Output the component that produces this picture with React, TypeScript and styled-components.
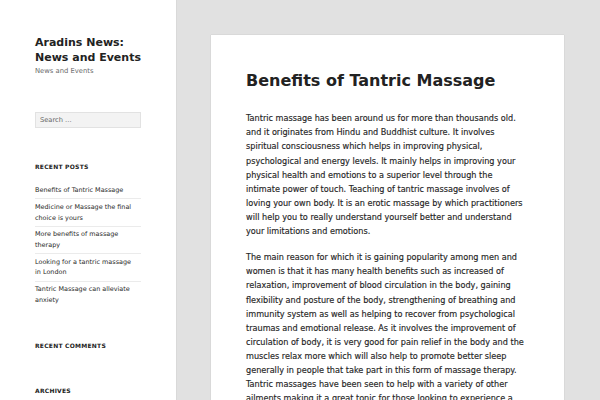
import React from "react";
import styled, { createGlobalStyle } from "styled-components";

const GlobalStyle = createGlobalStyle`
  html, body {
    margin: 0;
    padding: 0;
    height: 100%;
    overflow: hidden;
  }
  body {
    background: #e1e1e1;
    font-family: "DejaVu Sans", Verdana, sans-serif;
    color: #333;
  }
  * { box-sizing: border-box; }
`;

const Page = styled.div`
  display: flex;
  align-items: flex-start;
  min-height: 100vh;
`;

const Sidebar = styled.aside`
  flex: 0 0 176px;
  align-self: stretch;
  min-height: 100vh;
  background: #fff;
  box-shadow: 0 0 1px rgba(0, 0, 0, 0.2);
  padding: 35px 35px 0;
`;

const SiteTitle = styled.h1`
  margin: 0;
  font-size: 11px;
  line-height: 15px;
  font-weight: 700;
  color: #222;
`;

const Tagline = styled.p`
  margin: 2px 0 0;
  font-size: 6.8px;
  line-height: 9px;
  color: #6a6a6a;
`;

const Widget = styled.section<{ $gap: number }>`
  margin-top: ${(p) => p.$gap}px;
`;

const SearchInput = styled.input`
  display: block;
  width: 100%;
  height: 15.5px;
  margin: 0;
  padding: 0 4px;
  background: #f3f3f3;
  border: 1px solid #e2e2e2;
  border-radius: 0;
  font-family: "DejaVu Sans", Verdana, sans-serif;
  font-size: 6.7px;
  color: #666;
  outline: none;
  &::placeholder {
    color: #666;
    opacity: 1;
  }
`;

const WidgetTitle = styled.h2`
  margin: 0 0 11.8px;
  font-size: 6px;
  line-height: 9px;
  font-weight: 700;
  letter-spacing: 0.04em;
  text-transform: uppercase;
  color: #222;
`;

const PostList = styled.ul`
  list-style: none;
  margin: 0;
  padding: 0;
`;

const PostItem = styled.li`
  padding: 2.6px 7px 2.6px 0;
  font-size: 6.45px;
  line-height: 10.6px;
  color: #2b2b2b;
  border-top: 1px solid #ebebeb;
  &:first-child {
    border-top: 0;
  }
`;

const Main = styled.main`
  flex: 1;
  padding: 35px 36px 0 35px;
`;

const Article = styled.article`
  background: #fff;
  box-shadow: 0 0 1px rgba(0, 0, 0, 0.2);
  padding: 36px 37px 40px 35px;
`;

const EntryTitle = styled.h1`
  margin: 0 0 20.25px;
  font-size: 16px;
  line-height: 20px;
  font-weight: 700;
  color: #222;
`;

const Paragraph = styled.p`
  margin: 0 0 12.2px;
  font-size: 8.13px;
  line-height: 14.1px;
  color: #262626;
  -webkit-text-stroke: 0.15px #262626;
`;

const recentPosts = [
  "Benefits of Tantric Massage",
  "Medicine or Massage the final choice is yours",
  "More benefits of massage therapy",
  "Looking for a tantric massage in London",
  "Tantric Massage can alleviate anxiety",
];

const paragraphs = [
  "Tantric massage has been around us for more than thousands old. and it originates from Hindu and Buddhist culture. It involves spiritual consciousness which helps in improving physical, psychological and energy levels. It mainly helps in improving your physical health and emotions to a superior level through the intimate power of touch. Teaching of tantric massage involves of loving your own body. It is an erotic massage by which practitioners will help you to really understand yourself better and understand your limitations and emotions.",
  "The main reason for which it is gaining popularity among men and women is that it has many health benefits such as increased of relaxation, improvement of blood circulation in the body, gaining flexibility and posture of the body, strengthening of breathing and immunity system as well as helping to recover from psychological traumas and emotional release. As it involves the improvement of circulation of body, it is very good for pain relief in the body and the muscles relax more which will also help to promote better sleep generally in people that take part in this form of massage therapy. Tantric massages have been seen to help with a variety of other ailments making it a great tonic for those looking to experience a new level of relaxation.",
];

export default function App() {
  return (
    <>
      <GlobalStyle />
      <Page>
        <Sidebar>
          <header>
            <SiteTitle>Aradins News: News and Events</SiteTitle>
            <Tagline>News and Events</Tagline>
          </header>
          <Widget $gap={36}>
            <SearchInput type="search" placeholder="Search …" />
          </Widget>
          <Widget $gap={34.4}>
            <WidgetTitle>Recent Posts</WidgetTitle>
            <PostList>
              {recentPosts.map((t) => (
                <PostItem key={t}>{t}</PostItem>
              ))}
            </PostList>
          </Widget>
          <Widget $gap={33}>
            <WidgetTitle>Recent Comments</WidgetTitle>
          </Widget>
          <Widget $gap={36.5}>
            <WidgetTitle>Archives</WidgetTitle>
          </Widget>
        </Sidebar>
        <Main>
          <Article>
            <EntryTitle>Benefits of Tantric Massage</EntryTitle>
            {paragraphs.map((p, i) => (
              <Paragraph key={i}>{p}</Paragraph>
            ))}
          </Article>
        </Main>
      </Page>
    </>
  );
}
